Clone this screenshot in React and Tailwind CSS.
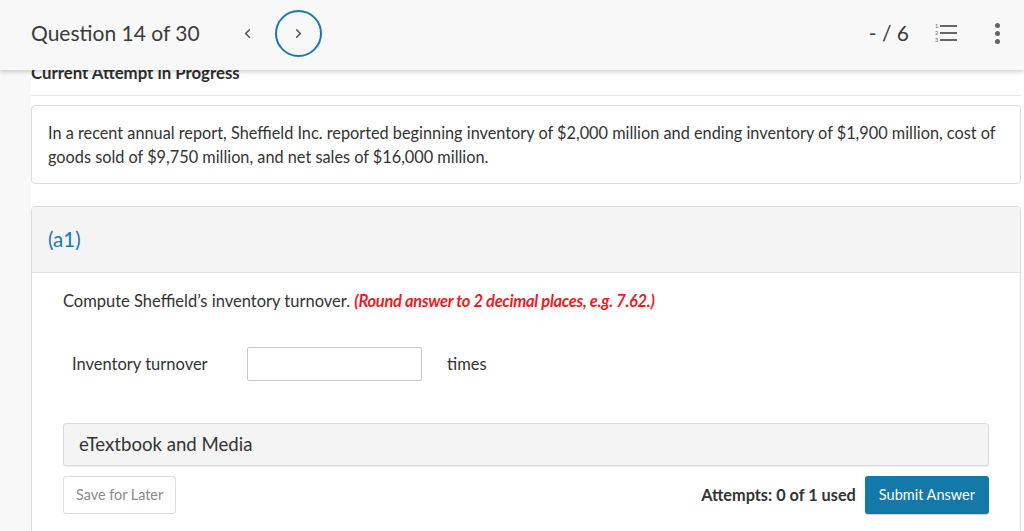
import { ChevronLeft, ChevronRight } from "lucide-react";

function ListIcon() {
    return (
        <svg width="24" height="20" viewBox="0 0 24 20" className="text-[#666]">
            <text x="0" y="5" fontSize="5.5" fill="currentColor" fontFamily="Lato, sans-serif">1</text>
            <text x="0" y="12" fontSize="5.5" fill="currentColor" fontFamily="Lato, sans-serif">2</text>
            <text x="0" y="19" fontSize="5.5" fill="currentColor" fontFamily="Lato, sans-serif">3</text>
            <line x1="5" y1="3" x2="22" y2="3" stroke="currentColor" strokeWidth="2" />
            <line x1="5" y1="10" x2="22" y2="10" stroke="currentColor" strokeWidth="2" />
            <line x1="5" y1="17" x2="22" y2="17" stroke="currentColor" strokeWidth="2" />
        </svg>
    )
}

function Header() {
    return (
        <div className="relative z-10 h-[70px] bg-[#f8f8f8] shadow-[0_2px_4px_rgba(0,0,0,0.18)] flex flex-row items-center pl-[31px] pr-[24px] pb-[4px]">
            <p className="text-[21px] text-[#3b3b3b]">Question 14 of 30</p>
            <button className="ml-[40px] text-[#555] flex items-center justify-center w-[16px]">
                <ChevronLeft size={15} strokeWidth={2.5} />
            </button>
            <button className="ml-[19px] w-[47px] h-[47px] rounded-full border-2 border-[#1a78ad] text-[#555] flex items-center justify-center">
                <ChevronRight size={15} strokeWidth={2.5} />
            </button>
            <p className="ml-auto text-[21px] text-[#3b3b3b]">- / 6</p>
            <div className="ml-[26px] flex items-center">
                <ListIcon />
            </div>
            <div className="ml-[36px] flex flex-col gap-[3px] items-center">
                <span className="w-[5px] h-[5px] rounded-full bg-[#666]" />
                <span className="w-[5px] h-[5px] rounded-full bg-[#666]" />
                <span className="w-[5px] h-[5px] rounded-full bg-[#666]" />
            </div>
        </div>
    )
}

export default function App() {
    return (
        <div className="w-[1024px] h-[531px] overflow-hidden bg-[#f8f8f8] text-[#333] font-['Lato','Open_Sans',sans-serif]">
            <Header />
            <div className="-mt-[7px] ml-[31px] bg-white pr-[3px] h-[600px]">
                <div className="border-b border-[#e6e6e6] h-[33px] flex items-start">
                    <p className="font-bold text-[16.8px] leading-[20px] text-[#2e2e2e]">Current Attempt in Progress</p>
                </div>
                <div className="mt-[9px] border border-[#dcdcdc] rounded-[4px] px-[16px] pt-[15px] pb-[14px] text-[16.3px] leading-[24px] text-[#333]">
                    In a recent annual report, Sheffield Inc. reported beginning inventory of $2,000 million and ending inventory of $1,900 million, cost of goods sold of $9,750 million, and net sales of $16,000 million.
                </div>
                <div className="mt-[22px] border border-[#dcdcdc] rounded-[4px] overflow-hidden">
                    <div className="bg-[#f4f4f4] h-[66px] border-b border-[#e2e2e2] flex items-center px-[16px]">
                        <p className="text-[20.5px] text-[#1a78ad]">(a1)</p>
                    </div>
                    <div className="px-[31px] pt-[16px] pb-[20px]">
                        <p className="text-[16.5px] leading-[24px] text-[#333]">
                            Compute Sheffield’s inventory turnover.{" "}
                            <span className="font-bold italic text-[#ee1b24] tracking-[-0.3px]">(Round answer to 2 decimal places, e.g. 7.62.)</span>
                        </p>
                        <div className="mt-[34px] flex flex-row items-center pl-[9px]">
                            <p className="text-[16.5px] w-[175px]">Inventory turnover</p>
                            <input className="w-[175px] h-[34px] border border-[#c8c8c8] rounded-[2px] outline-none" />
                            <p className="ml-[25px] text-[16.5px]">times</p>
                        </div>
                        <div className="mt-[42px] h-[43px] bg-[#f4f4f4] border border-[#dcdcdc] rounded-[3px] shadow-[0_1px_1px_rgba(0,0,0,0.08)] flex items-center px-[15px]">
                            <p className="text-[18.6px] text-[#333]">eTextbook and Media</p>
                        </div>
                        <div className="mt-[10px] flex flex-row items-center">
                            <button className="h-[38px] px-[12px] border border-[#dcdcdc] rounded-[3px] text-[14.4px] text-[#8a8a8a] bg-white">Save for Later</button>
                            <p className="ml-auto font-bold text-[16.3px] text-[#333]">Attempts: 0 of 1 used</p>
                            <button className="ml-[9px] h-[38px] px-[14px] rounded-[3px] bg-[#1379a9] text-white text-[14.5px] shadow-[0_1px_1px_rgba(0,0,0,0.2)]">Submit Answer</button>
                        </div>
                    </div>
                </div>
            </div>
        </div>
    )
}
